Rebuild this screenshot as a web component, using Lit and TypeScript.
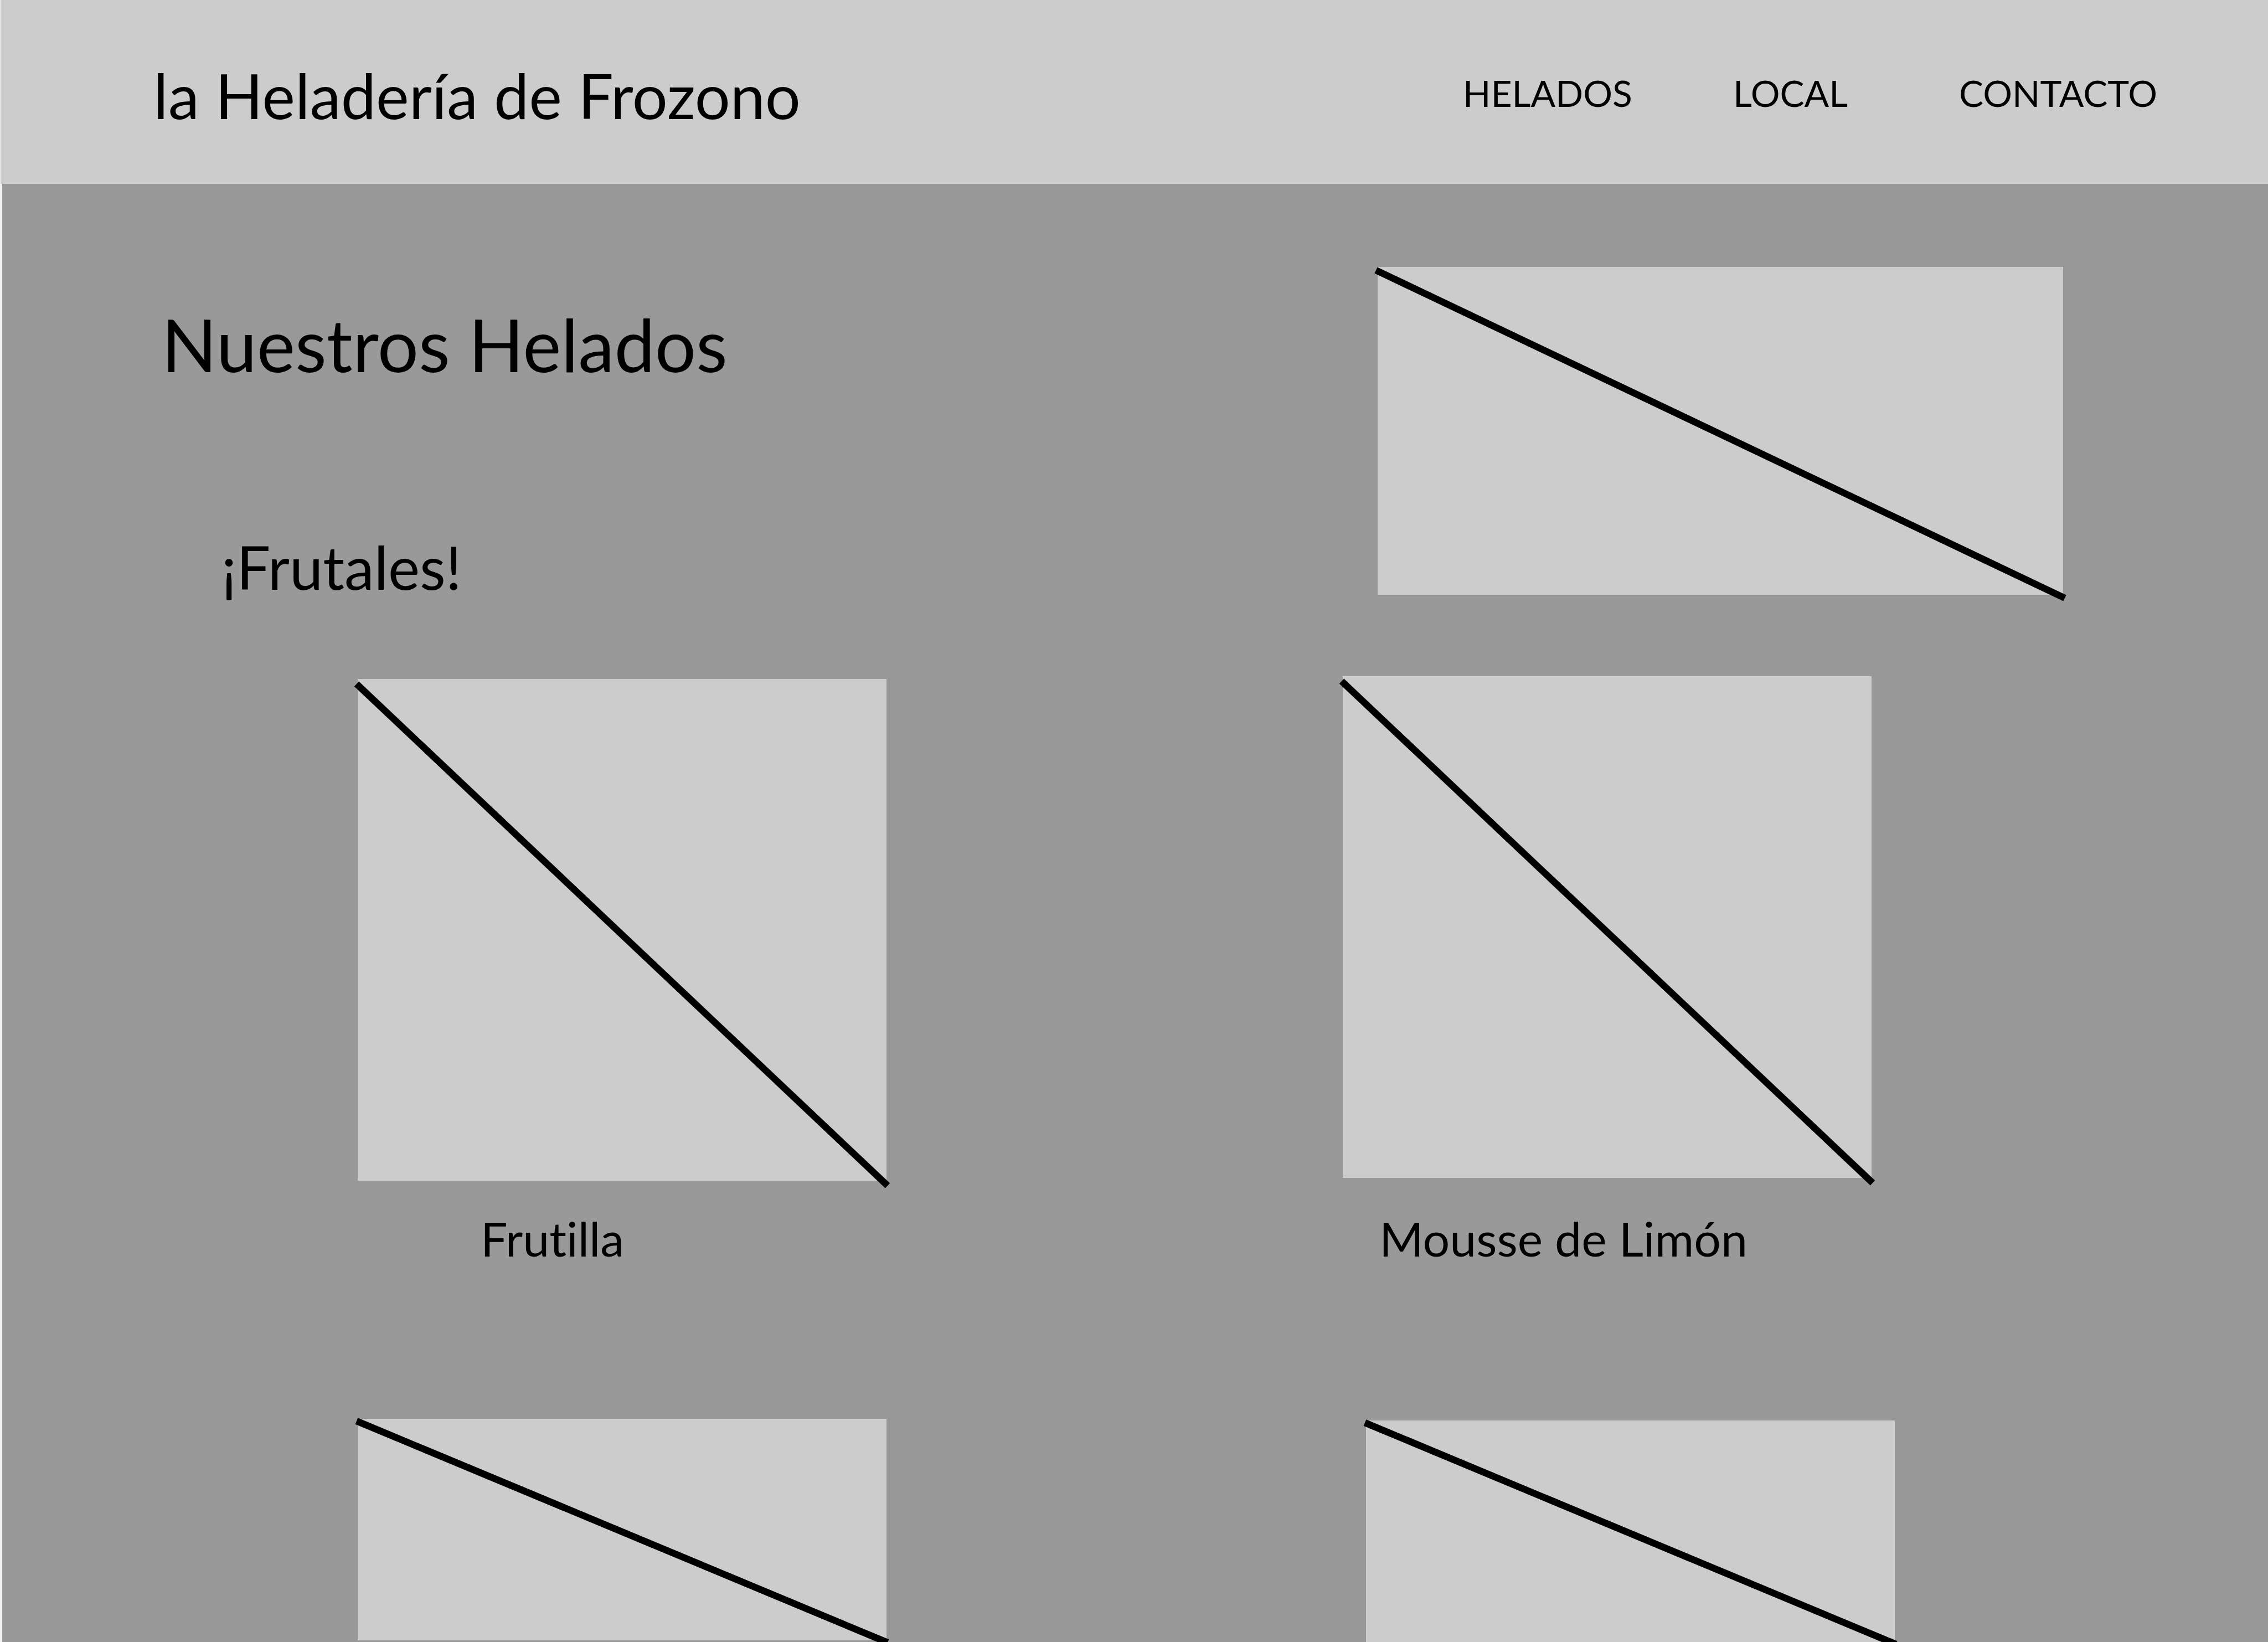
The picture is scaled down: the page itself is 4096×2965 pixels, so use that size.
import { LitElement, html, css, svg, nothing } from "lit";
import { customElement, property } from "lit/decorators.js";

/** Grey picture placeholder crossed by one diagonal stroke. */
@customElement("picture-box")
class PictureBox extends LitElement {
  @property({ type: Number }) w = 955;
  @property({ type: Number }) h = 906;
  @property() from = "0,0";
  @property() to = "0,0";
  @property() label = "";

  static styles = css`
    :host {
      display: block;
    }
    .box {
      display: block;
      width: 100%;
      height: auto;
      overflow: visible;
    }
    .fill {
      fill: #cccccc;
    }
    .stroke {
      stroke: #000000;
      stroke-width: 12.3;
    }
  `;

  render() {
    const [x1, y1] = this.from.split(",");
    const [x2, y2] = this.to.split(",");
    return html`<svg class="box" viewBox="0 0 ${this.w} ${this.h}" role="img" aria-label=${this.label}>
      ${svg`<rect class="fill" width=${this.w} height=${this.h}></rect>
      <line class="stroke" x1=${x1} y1=${y1} x2=${x2} y2=${y2}></line>`}
    </svg>`;
  }
}

interface Flavour {
  name?: string;
  label: string;
  h: number;
  from: string;
  to: string;
  kind: string;
}

const leftColumn: Flavour[] = [
  { name: "Frutilla", label: "Frutilla", h: 906, from: "-2,9", to: "957,915", kind: "strawberry" },
  { label: "Helado", h: 400, from: "-2,4", to: "957,404", kind: "plain" },
];

const rightColumn: Flavour[] = [
  { name: "Mousse de Limón", label: "Mousse de Limón", h: 906, from: "-2,9", to: "957,915", kind: "lemon" },
  { label: "Helado", h: 400, from: "-2,4", to: "957,404", kind: "shifted" },
];

@customElement("app-root")
class AppRoot extends LitElement {
  static styles = css`
    :host {
      display: block;
      min-height: 100vh;
      font-family: Lato, "Open Sans", sans-serif;
      font-variant-ligatures: none;
      color: #000000;
      background: #f2f2f2;
    }
    .page {
      display: flex;
      flex-direction: column;
      height: 100vh;
      overflow: hidden;
    }
    .top {
      display: flex;
      flex: none;
      align-items: center;
      justify-content: space-between;
      height: 332px;
      margin-left: 1px;
      padding: 0 200px 0 276px;
      box-sizing: border-box;
      background: #cccccc;
    }
    .brand {
      padding-top: 10px;
      font-size: 113px;
      line-height: 140px;
      white-space: nowrap;
    }
    .nav {
      display: grid;
      grid-template-columns: 488px 408px auto;
      padding-top: 4px;
    }
    .link {
      justify-self: start;
      color: inherit;
      text-decoration: none;
      font-size: 66px;
      line-height: 104px;
    }
    .content {
      flex: 1;
      margin-left: 4px;
      background: #999999;
    }
    .intro {
      display: grid;
      grid-template-columns: 2484fr 1238fr 370fr;
      align-items: start;
      padding-bottom: 128px;
    }
    .headings {
      padding: 210px 0 0 288px;
    }
    .title {
      margin: 0;
      font-size: 131px;
      font-weight: 400;
      line-height: 160px;
    }
    .subtitle {
      margin: 251px 0 0;
      padding-left: 108px;
      font-size: 108px;
      font-weight: 400;
      line-height: 140px;
    }
    .hero {
      margin-top: 150px;
    }
    .flavours {
      display: grid;
      grid-template-columns: 642fr 955fr 824fr 955fr 716fr;
      align-items: start;
    }
    .left {
      grid-column: 2;
      padding-top: 5px;
    }
    .right {
      grid-column: 4;
    }
    .card {
      margin: 0;
    }
    .caption {
      font-size: 86px;
      line-height: 104px;
      white-space: nowrap;
    }
    .strawberry .caption {
      padding: 52px 0 274px 222px;
    }
    .lemon .caption {
      padding: 57px 0 277px 66px;
    }
    .shifted {
      margin: 0 -42px 0 42px;
    }
  `;

  private card(f: Flavour) {
    return html`<figure class="card ${f.kind}">
      <picture-box .h=${f.h} .from=${f.from} .to=${f.to} .label=${f.label}></picture-box>
      ${f.name ? html`<figcaption class="caption">${f.name}</figcaption>` : nothing}
    </figure>`;
  }

  render() {
    return html`
      <div class="page">
        <header class="top">
          <div class="brand">la Heladería de Frozono</div>
          <nav class="nav">
            <a class="link" href="#helados">HELADOS</a>
            <a class="link" href="#local">LOCAL</a>
            <a class="link" href="#contacto">CONTACTO</a>
          </nav>
        </header>
        <main class="content">
          <section class="intro">
            <div class="headings">
              <h1 class="title">Nuestros Helados</h1>
              <h2 class="subtitle">¡Frutales!</h2>
            </div>
            <picture-box class="hero" .w=${1238} .h=${592} .from=${"-3,6"} .to=${"1241,598"} .label=${"Helados"}></picture-box>
          </section>
          <section class="flavours">
            <div class="left">${leftColumn.map((f) => this.card(f))}</div>
            <div class="right">${rightColumn.map((f) => this.card(f))}</div>
          </section>
        </main>
      </div>
    `;
  }
}
